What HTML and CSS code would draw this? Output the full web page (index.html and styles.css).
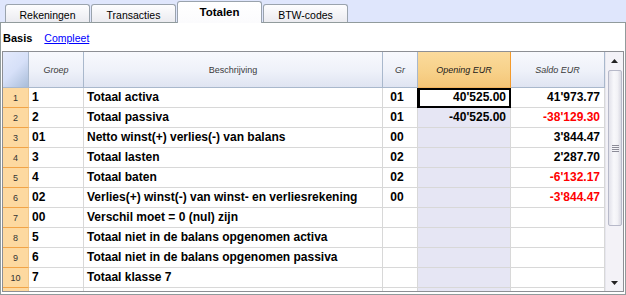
FILE: index.html
```html
<!DOCTYPE html>
<html>
<head>
<meta charset="utf-8">
<link rel="stylesheet" href="styles.css">
</head>
<body>
<div class="tabs">
  <div class="tab">Rekeningen</div>
  <div class="tab">Transacties</div>
  <div class="tab tab-active">Totalen</div>
  <div class="tab">BTW-codes</div>
</div>
<div class="panel">
  <div class="views">
    <span class="view-current">Basis</span>
    <a class="view-link" href="#">Compleet</a>
  </div>
  <div class="grid">
    <div class="table">
      <div class="row head">
        <div class="c rn corner"></div>
        <div class="c grp hl it">Groep</div>
        <div class="c desc hl">Beschrijving</div>
        <div class="c gr hl it">Gr</div>
        <div class="c op hl it hl-active">Opening EUR</div>
        <div class="c sal hl it">Saldo EUR</div>
      </div>
      <div class="row">
        <div class="c rn">1</div><div class="c grp">1</div><div class="c desc">Totaal activa</div><div class="c gr">01</div><div class="c op num cursor">40'525.00</div><div class="c sal num">41'973.77</div>
      </div>
      <div class="row">
        <div class="c rn">2</div><div class="c grp">2</div><div class="c desc">Totaal passiva</div><div class="c gr">01</div><div class="c op num">-40'525.00</div><div class="c sal num neg">-38'129.30</div>
      </div>
      <div class="row">
        <div class="c rn">3</div><div class="c grp">01</div><div class="c desc">Netto winst(+) verlies(-) van balans</div><div class="c gr">00</div><div class="c op num"></div><div class="c sal num">3'844.47</div>
      </div>
      <div class="row">
        <div class="c rn">4</div><div class="c grp">3</div><div class="c desc">Totaal lasten</div><div class="c gr">02</div><div class="c op num"></div><div class="c sal num">2'287.70</div>
      </div>
      <div class="row">
        <div class="c rn">5</div><div class="c grp">4</div><div class="c desc">Totaal baten</div><div class="c gr">02</div><div class="c op num"></div><div class="c sal num neg">-6'132.17</div>
      </div>
      <div class="row">
        <div class="c rn">6</div><div class="c grp">02</div><div class="c desc">Verlies(+) winst(-) van winst- en verliesrekening</div><div class="c gr">00</div><div class="c op num"></div><div class="c sal num neg">-3'844.47</div>
      </div>
      <div class="row">
        <div class="c rn">7</div><div class="c grp">00</div><div class="c desc">Verschil moet = 0 (nul) zijn</div><div class="c gr"></div><div class="c op num"></div><div class="c sal num"></div>
      </div>
      <div class="row">
        <div class="c rn">8</div><div class="c grp">5</div><div class="c desc">Totaal niet in de balans opgenomen activa</div><div class="c gr"></div><div class="c op num"></div><div class="c sal num"></div>
      </div>
      <div class="row">
        <div class="c rn">9</div><div class="c grp">6</div><div class="c desc">Totaal niet in de balans opgenomen passiva</div><div class="c gr"></div><div class="c op num"></div><div class="c sal num"></div>
      </div>
      <div class="row">
        <div class="c rn">10</div><div class="c grp">7</div><div class="c desc">Totaal klasse 7</div><div class="c gr"></div><div class="c op num"></div><div class="c sal num"></div>
      </div>
      <div class="row">
        <div class="c rn"></div><div class="c grp"></div><div class="c desc"></div><div class="c gr"></div><div class="c op num"></div><div class="c sal num"></div>
      </div>
    </div>
    <div class="scrollbar">
      <div class="sb-btn"><svg width="7" height="4" viewBox="0 0 7 4"><path d="M0 4 L3.5 0 L7 4 Z" fill="#222"/></svg></div>
      <div class="sb-track">
        <div class="sb-thumb"><span class="grip"></span></div>
      </div>
      <div class="sb-btn"><svg width="7" height="4" viewBox="0 0 7 4"><path d="M0 0 L7 0 L3.5 4 Z" fill="#222"/></svg></div>
    </div>
  </div>
</div>
</body>
</html>
```
FILE: styles.css
```css
* { box-sizing: border-box; }
html, body { margin: 0; padding: 0; }
body {
  width: 626px;
  height: 295px;
  overflow: hidden;
  background: #ffffff;
  font-family: "Liberation Sans", Arial, sans-serif;
  font-size: 11px;
  color: #000;
}
.tabs {
  height: 22px;
  background: #dfe6fc;
  display: flex;
  align-items: flex-end;
  padding-left: 5px;
  gap: 1px;
  position: relative;
  z-index: 2;
}
.tab {
  width: 85px;
  height: 18px;
  border: 1px solid #9aa3ad;
  border-bottom: none;
  border-radius: 3px 3px 0 0;
  background: linear-gradient(#fdfdfe, #ebebf0);
  text-align: center;
  font-size: 10.5px;
  line-height: 18px;
  padding-top: 1px;
  color: #000;
}
.tab-active {
  height: 22px;
  margin-bottom: -1px;
  background: linear-gradient(#ffffff, #fbfbfd);
  font-weight: bold;
  font-size: 11.5px;
  line-height: 19px;
  padding-top: 1px;
}
.panel {
  height: 273px;
  border: 1px solid #919b9c;
  background: #fff;
}
.views {
  height: 28px;
  display: flex;
  align-items: center;
  gap: 12px;
  padding-left: 2px;
  padding-top: 1px;
  font-size: 11px;
}
.view-current { font-weight: bold; }
.view-link { color: #0000ff; text-decoration: underline; font-size: 10.5px; }
.grid {
  margin: 0 1px;
  height: 241px;
  border: 1px solid #8d8f94;
  display: flex;
  overflow: hidden;
}
.table {
  width: 602px;
  flex: none;
  overflow: hidden;
}
.row {
  display: grid;
  grid-template-columns: 26px 55px 299px 35px 93px 94px;
  height: 20px;
}
.row.head { height: 36px; }
.c {
  border-right: 1px solid #d8d8d8;
  border-bottom: 1px solid #d8d8d8;
  font-weight: bold;
  font-size: 12px;
  line-height: 19px;
  padding: 0 3px;
  white-space: nowrap;
  overflow: hidden;
}
.rn {
  background: #fdd9a0;
  border-bottom-color: #f2a447;
  border-right-color: #f2c88a;
  font-weight: normal;
  font-size: 9px;
  color: #333;
  text-align: center;
  padding: 1px 0 0 0;
}
.gr { text-align: center; padding: 0 6px 0 0; }
.num { text-align: right; padding: 0 4px 0 0; }
.op { background: #e6e6f4; }
.neg { color: #ff0000; }
.cursor {
  background: #fff;
  outline: 2px solid #000;
  outline-offset: -2px;
  box-shadow: -1px 0 0 0 #000;
}
.head .c {
  border-right-color: #a9b8cc;
  border-bottom-color: #a9b8cc;
  background: linear-gradient(#f8f9fd, #eef1f9 55%, #dfe4f1);
  font-weight: normal;
  font-size: 9px;
  color: #3a3a3a;
  text-align: center;
  line-height: 37px;
  padding: 0;
}
.head .it { font-style: italic; }
.head .corner {
  background: linear-gradient(135deg, #e4eafc 0%, #d6e0f8 50%, #a9bdd9 100%);
  border-right-color: #a9b8cc;
}
.head .hl-active {
  background: linear-gradient(#fbdb9c, #f7d088 60%, #f4c577);
  border-right-color: #f39a2c;
  border-bottom-color: #f3b45e;
  color: #1a1a1a;
}
.scrollbar {
  flex: 1;
  display: flex;
  flex-direction: column;
  background: #f3f2f7;
  border-left: 1px solid #e6e6ee;
}
.sb-btn {
  height: 17px;
  flex: none;
  display: flex;
  align-items: center;
  justify-content: center;
}
.sb-track {
  flex: 1;
  padding-top: 1px;
}
.sb-thumb {
  margin: 0 1px 0 2px;
  height: 156px;
  border: 1px solid #b7b9c9;
  border-radius: 2px;
  background: linear-gradient(90deg, #e2e2ea, #f8f8fb 40%, #f2f2f6 70%, #d9d9e2);
  display: flex;
  align-items: center;
  justify-content: center;
}
.grip {
  width: 7px;
  height: 7px;
  background: repeating-linear-gradient(#8c8c98 0 1px, transparent 1px 2px);
}
```
